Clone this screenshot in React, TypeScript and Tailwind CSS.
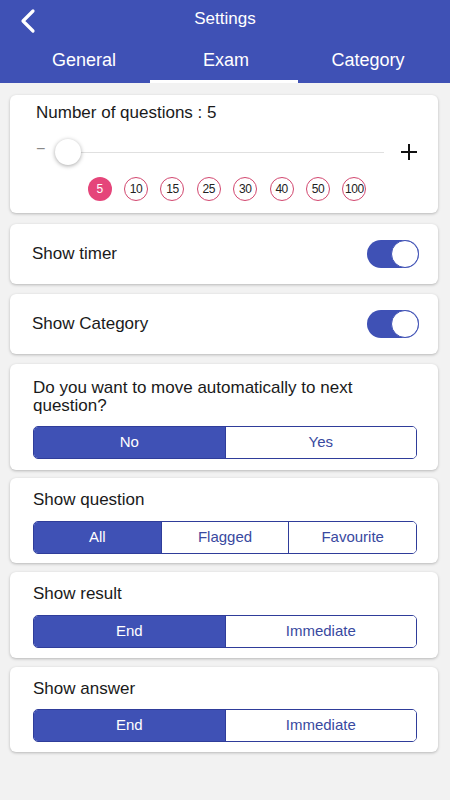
import { useState } from "react";

const chips = [5, 10, 15, 25, 30, 40, 50, 100];

function Toggle({ on, onClick }: { on: boolean; onClick: () => void }) {
  return (
    <button
      onClick={onClick}
      className={`relative h-[28px] w-[52px] rounded-full ${on ? "bg-[#3f51b5]" : "bg-[#c8c8c8]"}`}
    >
      <span
        className={`absolute top-0 h-[28px] w-[28px] rounded-full border-[1.5px] bg-white ${
          on ? "right-0 border-[#3f51b5]" : "left-0 border-[#c8c8c8]"
        }`}
      />
    </button>
  );
}

function Segmented({
  options,
  value,
  onChange,
}: {
  options: string[];
  value: number;
  onChange: (i: number) => void;
}) {
  return (
    <div className="flex h-[33px] overflow-hidden rounded-[5px] border border-[#2f3d9a]">
      {options.map((opt, i) => (
        <button
          key={opt}
          onClick={() => onChange(i)}
          className={`flex-1 text-[15px] ${i > 0 ? "border-l border-[#2f3d9a]" : ""} ${
            value === i ? "bg-[#3f51b5] text-white" : "bg-white text-[#3949a0]"
          }`}
        >
          {opt}
        </button>
      ))}
    </div>
  );
}

function Card({ children, className = "" }: { children: React.ReactNode; className?: string }) {
  return (
    <div className={`rounded-[6px] bg-white shadow-[0_1px_3px_rgba(0,0,0,0.25)] ${className}`}>{children}</div>
  );
}

export default function App() {
  const [tab, setTab] = useState(1);
  const [timer, setTimer] = useState(true);
  const [category, setCategory] = useState(true);
  const [auto, setAuto] = useState(0);
  const [showQ, setShowQ] = useState(0);
  const [result, setResult] = useState(0);
  const [answer, setAnswer] = useState(0);
  const [count, setCount] = useState(5);

  const tabs = [
    { label: "General", shift: "left-[9px]" },
    { label: "Exam", shift: "left-[1px]" },
    { label: "Category", shift: "left-[-7px]" },
  ];

  return (
    <div className="min-h-[800px] w-[450px] bg-[#f2f2f2] font-['Liberation_Sans',Arial,sans-serif] text-[#1a1a1a]">
      {/* Header */}
      <div className="bg-[#3f51b5] text-white">
        <div className="relative flex h-[40px] items-center justify-center">
          <button className="absolute left-[17px] top-[8px]">
            <svg width="22" height="26" viewBox="0 0 22 26" fill="none">
              <path d="M16 3 L6 13 L16 23" stroke="white" strokeWidth="3.2" strokeLinecap="round" strokeLinejoin="round" />
            </svg>
          </button>
          <span className="mt-[-2px] text-[17px]">Settings</span>
        </div>
        <div className="flex h-[43px]">
          {tabs.map((t, i) => (
            <button key={t.label} onClick={() => setTab(i)} className="relative flex-1 text-[18px]">
              <span className={`relative top-[-1px] ${t.shift}`}>{t.label}</span>
              {tab === i && <span className="absolute bottom-0 left-0 right-[2px] h-[3px] bg-white" />}
            </button>
          ))}
        </div>
      </div>

      <div className="flex flex-col pl-[10px] pr-[12px] pt-[12px]">
        {/* Number of questions */}
        <Card className="h-[118px] pl-[26px] pr-[20px] pt-[8px]">
          <div className="text-[17px] leading-[20px]">Number of questions : {count}</div>
          <div className="mt-[14px] flex h-[30px] items-center">
            <span className="relative top-[-3px] w-[16px] text-[16px] leading-none text-[#888]">−</span>
            <div className="relative flex-1">
              <div className="ml-[16px] h-px bg-[#e0e0e0]" />
              <span className="absolute left-[3px] top-[-13px] h-[26px] w-[26px] rounded-full bg-white shadow-[0_1px_4px_rgba(0,0,0,0.35)]" />
            </div>
            <svg className="ml-[16px]" width="18" height="18" viewBox="0 0 18 18">
              <path d="M9 1 V17 M1 9 H17" stroke="#111" strokeWidth="2" />
            </svg>
          </div>
          <div className="mt-[10px] flex justify-center gap-[12.4px]">
            {chips.map((c) => (
              <button
                key={c}
                onClick={() => setCount(c)}
                className={`flex h-[24px] w-[24px] items-center justify-center rounded-full text-[12px] tracking-[-0.5px] ${
                  count === c
                    ? "bg-[#e5457a] text-white"
                    : "border-[1.5px] border-[#d2476f] bg-white text-[#222]"
                }`}
              >
                {c}
              </button>
            ))}
          </div>
        </Card>

        <Card className="mt-[11px] flex h-[60px] items-center justify-between pl-[22px] pr-[19px]">
          <span className="text-[17px]">Show timer</span>
          <Toggle on={timer} onClick={() => setTimer(!timer)} />
        </Card>

        <Card className="mt-[10px] flex h-[60px] items-center justify-between pl-[22px] pr-[19px]">
          <span className="text-[17px]">Show Category</span>
          <Toggle on={category} onClick={() => setCategory(!category)} />
        </Card>

        <Card className="mt-[10px] pb-[11px] pl-[23px] pr-[21px] pt-[15px]">
          <div className="text-[17px] leading-[18px]">
            Do you want to move automatically to next
            <br />
            question?
          </div>
          <div className="mt-[11px]">
            <Segmented options={["No", "Yes"]} value={auto} onChange={setAuto} />
          </div>
        </Card>

        <Card className="mt-[8px] pb-[9px] pl-[23px] pr-[21px] pt-[12px]">
          <div className="text-[17px] leading-[20px]">Show question</div>
          <div className="mt-[11px]">
            <Segmented options={["All", "Flagged", "Favourite"]} value={showQ} onChange={setShowQ} />
          </div>
        </Card>

        <Card className="mt-[9px] pb-[10px] pl-[23px] pr-[21px] pt-[12px]">
          <div className="text-[17px] leading-[20px]">Show result</div>
          <div className="mt-[11px]">
            <Segmented options={["End", "Immediate"]} value={result} onChange={setResult} />
          </div>
        </Card>

        <Card className="mt-[9px] pb-[10px] pl-[23px] pr-[21px] pt-[12px]">
          <div className="text-[17px] leading-[20px]">Show answer</div>
          <div className="mt-[10px]">
            <Segmented options={["End", "Immediate"]} value={answer} onChange={setAnswer} />
          </div>
        </Card>
      </div>
    </div>
  );
}
